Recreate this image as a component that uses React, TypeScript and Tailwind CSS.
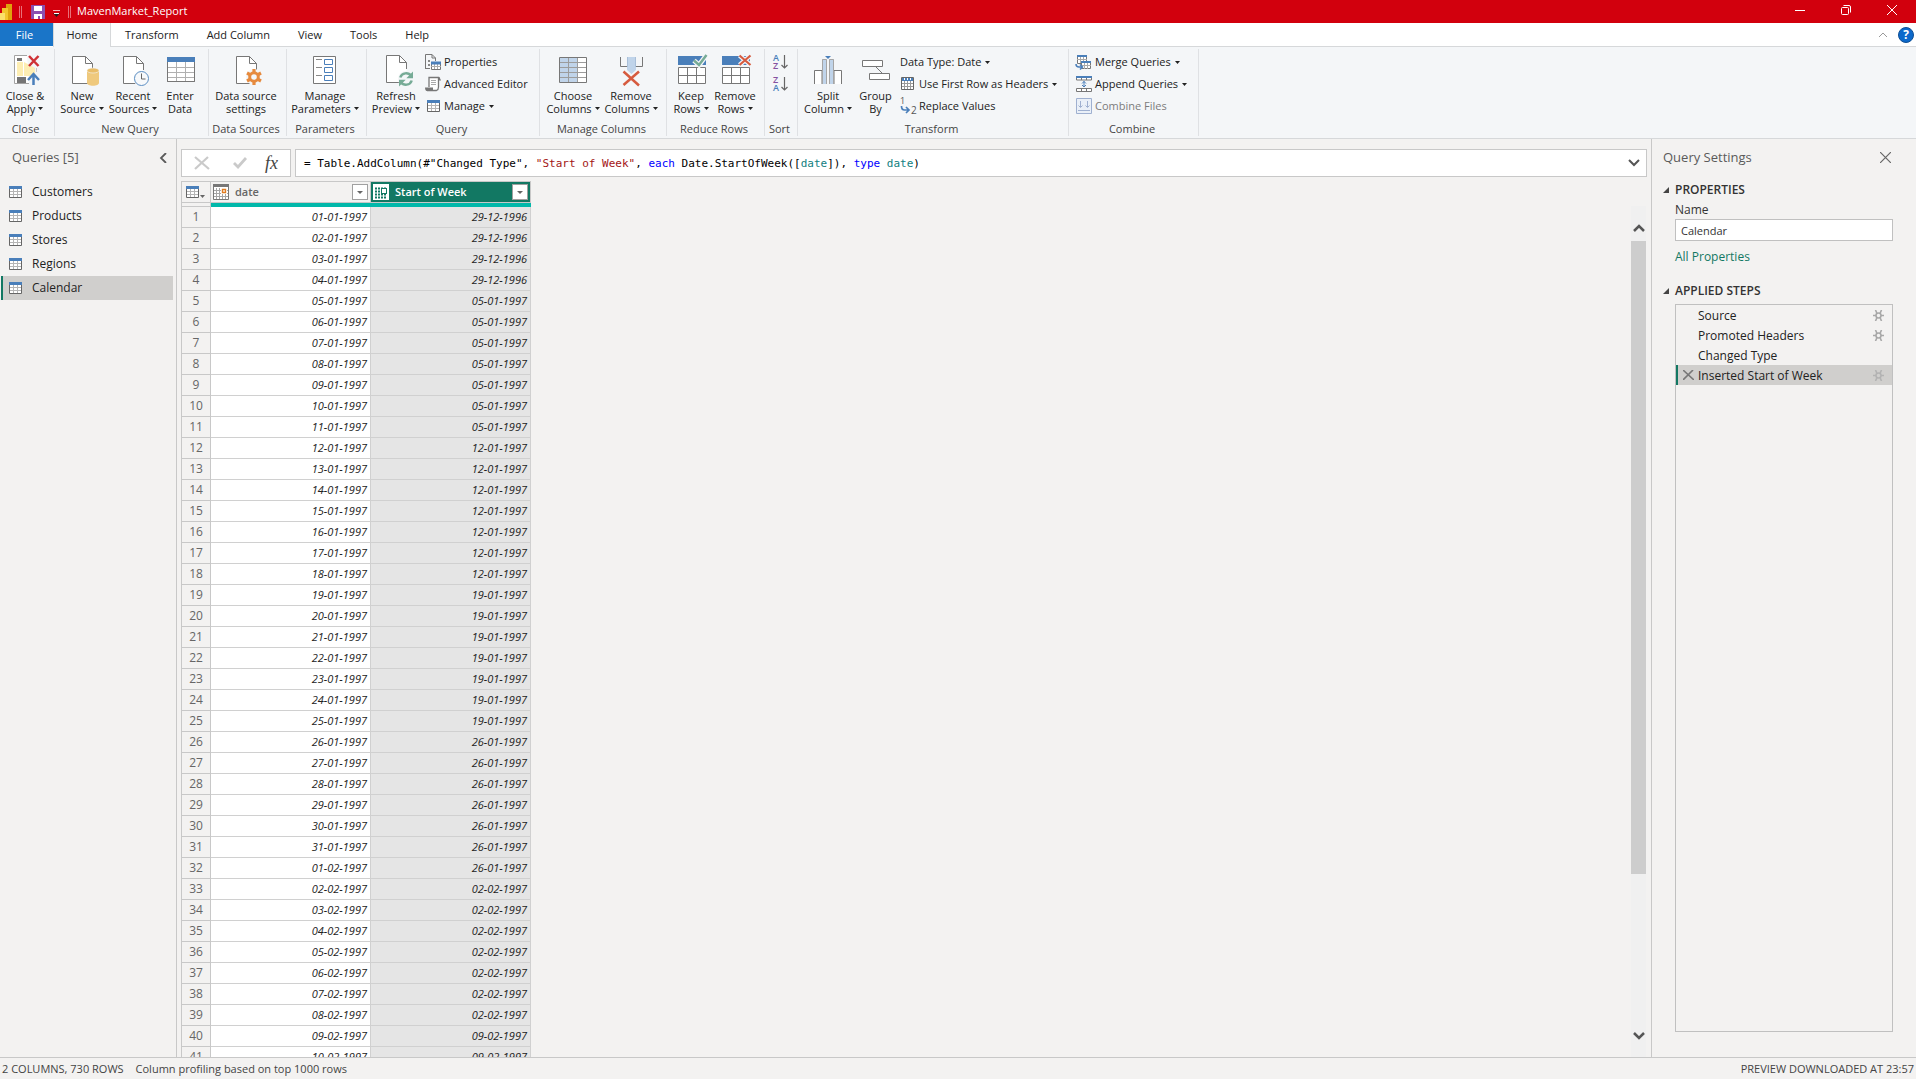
import type { ReactNode } from "react";

/* ---------- shared data ---------- */

const tabs = ["Transform", "Add Column", "View", "Tools", "Help"];
const queries = ["Customers", "Products", "Stores", "Regions", "Calendar"];
const steps = [
  { name: "Source", gear: true },
  { name: "Promoted Headers", gear: true },
  { name: "Changed Type", gear: false },
  { name: "Inserted Start of Week", gear: true },
];

const DAY = 86400000;
const pad = (n: number) => String(n).padStart(2, "0");
const format = (d: Date) =>
  `${pad(d.getUTCDate())}-${pad(d.getUTCMonth() + 1)}-${d.getUTCFullYear()}`;

const rows = Array.from({ length: 41 }, (_, i) => {
  const date = new Date(Date.UTC(1997, 0, 1) + i * DAY);
  const week = new Date(date.getTime() - date.getUTCDay() * DAY);
  return { n: i + 1, date: format(date), week: format(week) };
});

/* ---------- icons ---------- */

function Big({ children }: { children: ReactNode }) {
  return (
    <svg className="h-8 w-8 shrink-0 overflow-visible" viewBox="0 0 32 32" fill="none" aria-hidden="true">
      {children}
    </svg>
  );
}

function Small({ children }: { children: ReactNode }) {
  return (
    <svg className="h-4 w-4 shrink-0 overflow-visible" viewBox="0 0 16 16" fill="none" aria-hidden="true">
      {children}
    </svg>
  );
}

function Doc({ y = 0 }: { y?: number }) {
  return (
    <g transform={`translate(0 ${y})`}>
      <path d="M6.5 2.5h13l7 7v20h-20z" fill="#fff" />
      <path d="M22 29.5H6.5v-27h13l7 7V16M19.5 2.5v7h7" stroke="#777" />
    </g>
  );
}

const CloseApplyIcon = () => (
  <Big>
    <path d="M18 1.500H5.500v28H20" stroke="#a3a3a3" fill="#fff" />
    <path d="M8 8h6v14H8z M15 8l11 6v8H15z" fill="#fdeeb3" />
    <path d="M8 4h5v3H8zM8 23h9v6H8z" fill="#757575" />
    <path d="M27.500 14v4" stroke="#c9c9c9" />
    <path d="M20 2l9.500 10M29.500 2L20 12" stroke="#cf3236" strokeWidth="2.500" />
    <path d="M24.500 31V20.500M19 26l5.500-6 5.500 6" stroke="#4a7fba" strokeWidth="2.500" />
  </Big>
);

const NewSourceIcon = () => (
  <Big>
    <Doc />
    <path d="M21 17h12v12c0 1.500-2.700 2.700-6 2.700S21 30.500 21 29z" fill="#efc97d" />
    <ellipse cx="27" cy="16.500" rx="6" ry="2.500" fill="#e9bd68" stroke="#f4f6f8" strokeWidth="0.600" />
  </Big>
);

const RecentIcon = () => (
  <Big>
    <Doc />
    <circle cx="24.500" cy="24.500" r="8" fill="#f4f6f8" />
    <circle cx="24.500" cy="24.500" r="7" fill="#f7f9fb" stroke="#5c8fc4" />
    <path d="M24.500 19.500v5.500h4" stroke="#666" />
  </Big>
);

const EnterDataIcon = () => (
  <Big>
    <path d="M3.500 3.500h27v24h-27z" fill="#fff" stroke="#777" />
    <path d="M3 13.500h28M3 18.500h28M3 23.500h28M12.500 8v20M21.500 8v20" stroke="#b0b0b0" />
    <path d="M3.500 8v19.500h27V8" stroke="#777" />
    <path d="M3 3h28v5H3z" fill="#4a7fba" />
  </Big>
);

const DataSettingsIcon = () => (
  <Big>
    <Doc />
    <circle cx="24" cy="23" r="8" fill="#f4f6f8" />
    <circle cx="24" cy="23" r="4.300" stroke="#e68a3e" strokeWidth="3" />
    <path
      d="M24 15v3M24 28v3M17 19l2.700 1.500M28.300 25.500L31 27M17 27l2.700-1.500M28.300 20.500L31 19"
      stroke="#e68a3e"
      strokeWidth="3.200"
    />
  </Big>
);

const ParametersIcon = () => (
  <Big>
    <path d="M4.500 2.500h22v27h-22z" fill="#fff" stroke="#777" />
    <path d="M7 5.500h6M7 13.500h6M7 21.500h6" stroke="#888" />
    <path d="M15.500 5.500h8v5h-8zM15.500 13.500h8v5h-8zM15.500 21.500h8v5h-8z" stroke="#4a7fba" />
  </Big>
);

const RefreshIcon = () => (
  <Big>
    <Doc y={-1} />
    <circle cx="26" cy="25" r="8" fill="#f4f6f8" />
    <path d="M20.300 23.500c1.500-5 8-5.500 11-1.500M31.700 26.500c-1.500 5-8 5.500-11 1.500" stroke="#76ab96" strokeWidth="2.500" />
    <path d="M33 17.500v6.700h-6.700zM19 32.500v-6.700h6.700z" fill="#76ab96" />
  </Big>
);

const ChooseColumnsIcon = () => (
  <Big>
    <path d="M2.500 3.500h27v25h-27z" fill="#fff" />
    <path d="M3 4h18v24H3z" fill="#c0d4ea" />
    <path d="M3 8.500h26M3 13.500h26M3 18.500h26M3 23.500h26M11.500 4v24M20.500 4v24" stroke="#9c9c9c" />
    <path d="M2.500 3.500h27v25h-27z" stroke="#777" />
  </Big>
);

const RemoveColumnsIcon = () => (
  <Big>
    <path d="M5.500 3v9.500H12M27.500 3v9.500H21" stroke="#777" />
    <path d="M12 3h9v13l-4.500 4-4.500-4z" fill="#c0d4ea" />
    <path d="M12.500 3v10M20.500 3v10" stroke="#a9bfd8" />
    <path d="M8.500 17.500l15.500 14M24 17.500L8.500 31" stroke="#d65b3f" strokeWidth="2.500" />
  </Big>
);

function RowsGrid() {
  return (
    <>
      <path d="M3 2h28v9H3z" fill="#4a7fba" />
      <path d="M3.500 13.500h27v16h-27zM3 21.500h28M12.500 13v17M21.500 13v17" fill="#fff" stroke="#777" />
    </>
  );
}

const KeepRowsIcon = () => (
  <Big>
    <RowsGrid />
    <path d="M19 6.500l5 4.500L31.500 1" stroke="#f4f6f8" strokeWidth="5" />
    <path d="M19 6.500l5 4.500L31.500 1" stroke="#76ab96" strokeWidth="2.500" />
  </Big>
);

const RemoveRowsIcon = () => (
  <Big>
    <RowsGrid />
    <path d="M20.500 1.500l11 9.500M31.500 1.500l-11 9.500" stroke="#f4f6f8" strokeWidth="4.500" />
    <path d="M20.500 1.500l11 9.500M31.500 1.500l-11 9.500" stroke="#d65b3f" strokeWidth="2.200" />
  </Big>
);

const SplitColumnIcon = () => (
  <Big>
    <path d="M2.500 30V16.500H10V30M22 30V16.500h7.500V30" fill="#fff" stroke="#777" />
    <path d="M10 5h5v25h-5zM17 5h5v25h-5z" fill="#c0d4ea" />
    <path d="M10.500 30V5.500h4V30M17.500 30V5.500h4V30" stroke="#a5a5a5" />
    <path d="M13 2h6l-3 3z" fill="#4a7fba" />
  </Big>
);

const GroupByIcon = () => (
  <Big>
    <path d="M2.500 6.500h20v6h-20zM9.500 19.500h20v6h-20z" fill="#fff" stroke="#777" />
    <path d="M16 13l6 6" stroke="#777" />
  </Big>
);

const PropertiesIcon = () => (
  <Small>
    <path d="M.5 14.500V.5H7l3.500 3.500v3M7 .5V4h3.500M0 14.500h5" stroke="#777" />
    <path d="M3 6h2v2H3zM3 10h2v2H3z" fill="#888" />
    <path d="M6.500 8.500h9v7h-9z" fill="#fff" stroke="#777" />
    <path d="M6 12.500h10M9.500 10v5M12.500 10v5" stroke="#aaa" />
    <path d="M6 7.500h10v3H6z" fill="#4a7fba" />
  </Small>
);

const EditorIcon = () => (
  <Small>
    <path d="M4 11V1.500h9.500V11c0 2-.5 3-2 3.500H2" fill="#fff" stroke="#777" strokeWidth="1.300" />
    <path d="M6 4.500h5M6 6.500h5M6 8.500h5" stroke="#aaa" />
    <path d="M0 11.500h8V14c0 .5.500.8 1 1H1.500C.5 14.500 0 13 0 11.500zM13 1h1.500L16 4.500h-3z" fill="#777" />
  </Small>
);

function TableIcon() {
  return (
    <svg className="h-3 w-[13px] shrink-0" viewBox="0 0 13 12" fill="none" aria-hidden="true">
      <path d="M.5.5h12v11H.5z" fill="#fff" />
      <path d="M1 5.500h11M1 8.500h11M4.500 3v9M8.500 3v9" stroke="#b5b5b5" />
      <path d="M.5 3v8.500h12V3" stroke="#666" />
      <path d="M0 0h13v3H0z" fill="#4a7fba" />
    </svg>
  );
}

const HeadersIcon = () => (
  <Small>
    <path d="M1.500 1.500h12v12h-12z" fill="#fff" stroke="#666" />
    <path d="M2 7.500h11M2 10.500h11M4.500 4v9M7.500 4v9M10.500 4v9" stroke="#999" />
    <path d="M2 2h11v3H2z" fill="#4a7fba" />
    <path d="M4.500 2v2M7.500 2v2M10.500 2v2" stroke="#fff" />
  </Small>
);

const ReplaceIcon = () => (
  <Small>
    <text x="0" y="6" fontSize="9" fill="#555">1</text>
    <text x="11" y="16" fontSize="10" fill="#555">2</text>
    <path d="M1.500 8c0 3 1 4 3 4H8M6 9l3 3-3 3" stroke="#4a7fba" strokeWidth="1.700" />
  </Small>
);

const MergeIcon = () => (
  <Small>
    <path d="M1.500 1.500h9v8h-9z" fill="#fff" stroke="#777" />
    <path d="M1 5.500h10M4.500 3v6M7.500 3v6" stroke="#aaa" />
    <path d="M1 1h10v2H1z" fill="#4a7fba" />
    <path d="M5.500 7.500h9v7h-9z" fill="#fff" stroke="#777" />
    <path d="M5 11.500h10M8.500 9v6M11.500 9v6" stroke="#aaa" />
    <path d="M5 7h10v2H5z" fill="#4a7fba" />
    <path d="M0 10c0 2.500 1 3 3 3h2.500M4 10.500L6.500 13 4 15.500" stroke="#4a7fba" strokeWidth="1.500" />
  </Small>
);

const AppendIcon = () => (
  <Small>
    <path d="M.5.5h15v3.500H.5zM.5 12.500h15v3H.5zM5.500 1v3M10.500 1v3M5.500 12.500v3M10.500 12.500v3" fill="#fff" stroke="#777" />
    <path d="M0 0h16v2H0z" fill="#4a7fba" />
    <path d="M8 5v6M6 7.500L8 5.500l2 2M6 9l2 2 2-2" stroke="#4a7fba" />
  </Small>
);

const CombineIcon = () => (
  <Small>
    <path d="M.5.500h15v15H.5z" fill="#eaf0f8" stroke="#9fb0d0" />
    <path d="M4.500 3v6M2.500 7.500l2 2 2-2M11.500 3v6M9.500 7.500l2 2 2-2M2 12.500h12" stroke="#9fb0d0" />
  </Small>
);

function SortIcon({ first, second }: { first: "A" | "Z"; second: "A" | "Z" }) {
  return (
    <Small>
      <text x="0" y="7" fontSize="9" fontWeight="600" fill={first === "A" ? "#4a7fba" : "#8552a1"}>{first}</text>
      <text x="0" y="15" fontSize="9" fontWeight="600" fill={second === "A" ? "#4a7fba" : "#8552a1"}>{second}</text>
      <path d="M11.500 1v13M8.500 11l3 3 3-3" stroke="#666" strokeWidth="1.200" />
    </Small>
  );
}

function Caret({ className = "h-[3px] w-[5px] text-[#222]" }: { className?: string }) {
  return (
    <svg className={`inline-block shrink-0 align-middle ${className}`} viewBox="0 0 5 3" preserveAspectRatio="none" aria-hidden="true">
      <path d="M0 0h5L2.500 3z" fill="currentColor" />
    </svg>
  );
}

function CalendarIcon({ selected }: { selected?: boolean }) {
  if (selected) {
    return (
      <svg className="h-4 w-4 shrink-0" viewBox="0 0 16 16" fill="none" aria-hidden="true">
        <path d="M0 0h16v16H0z" fill="#fff" />
        <path
          d="M2 4.500h12M2 7.500h12M2 10.500h12M2 13.500h12"
          stroke="#127863"
          strokeWidth="2"
          strokeDasharray="2 1"
        />
        <path d="M8 4h6v6H8z" fill="#127863" />
        <path d="M9 5h4v4H9z" fill="#fff" />
      </svg>
    );
  }
  return (
    <svg className="h-4 w-4 shrink-0" viewBox="0 0 16 16" fill="none" aria-hidden="true">
      <path d="M.5.5h15v15H.5z" fill="#fff" stroke="#777" />
      <path d="M1 6.500h14M1 9.500h14M1 12.500h14M3.500 4v11M6.500 4v11M9.500 4v11M12.500 4v11" stroke="#a5a5a5" />
      <path d="M0 0h16v3H0z" fill="#777" />
      <path d="M8 4h6v6H8z" fill="#fff" />
      <path d="M9.500 5.500h3v3h-3z" stroke="#e07b1f" strokeWidth="1.400" />
    </svg>
  );
}

function GearIcon({ faded }: { faded?: boolean }) {
  return (
    <svg className="h-[11px] w-[11px]" viewBox="0 0 11 11" fill="none" aria-hidden="true">
      <g stroke={faded ? "#b3b3b3" : "#a8a8a8"} strokeWidth="1.600">
        <circle cx="5.500" cy="5.500" r="2.500" />
        <path d="M0 5.500h3M8 5.500h3M2.500 0l1.500 3.500M8.500 0L7 3.500M2.500 11l1.500-3.500M8.500 11L7 7.500" />
      </g>
    </svg>
  );
}

/* ---------- ribbon ---------- */

function Group({ title, width, children }: { title: string; width: string; children: ReactNode }) {
  return (
    <section aria-label={title} className={`flex shrink-0 flex-col border-r border-[#dfe1e4] ${width}`}>
      <div className="flex flex-1 pt-[5px]">{children}</div>
      <h2 className="pr-[3px] pb-px text-center leading-3 text-[#444]">{title}</h2>
    </section>
  );
}

type BigButtonProps = { icon: ReactNode; top: string; bottom: string; width: string; caret?: boolean };

function BigButton({ icon, top, bottom, width, caret }: BigButtonProps) {
  return (
    <button className={`flex shrink-0 flex-col items-center whitespace-nowrap leading-[13px] ${width}`}>
      {icon}
      <span className="mt-[3px]">{top}</span>
      <span className="flex items-center gap-[3px]">
        {bottom}
        {caret && <Caret />}
      </span>
    </button>
  );
}

type SmallButtonProps = { icon?: ReactNode; label: string; caret?: boolean; disabled?: boolean };

function SmallButton({ icon, label, caret, disabled }: SmallButtonProps) {
  return (
    <button
      disabled={disabled}
      className="flex h-[22px] items-center gap-[3px] whitespace-nowrap disabled:text-[#7c7c7c]"
    >
      {icon && <span className="flex w-4 justify-center">{icon}</span>}
      {label}
      {caret && <span className="flex w-[7px] justify-center"><Caret /></span>}
    </button>
  );
}

function SmallColumn({ children }: { children: ReactNode }) {
  return <div className="-mt-[3px] ml-[3px] flex flex-col">{children}</div>;
}

function Ribbon() {
  return (
    <div className="flex h-[92px] shrink-0 border-b border-[#d6d8da] bg-[#f4f6f8] pt-0.5 pb-0.5">
      <Group title="Close" width="w-[55px]">
        <BigButton icon={<CloseApplyIcon />} top="Close &amp;" bottom="Apply" width="w-[50px]" caret />
      </Group>
      <Group title="New Query" width="w-[154px]">
        <div className="flex pl-0.5">
          <BigButton icon={<NewSourceIcon />} top="New" bottom="Source" width="w-[50px]" caret />
          <BigButton icon={<RecentIcon />} top="Recent" bottom="Sources" width="w-[52px]" caret />
          <BigButton icon={<EnterDataIcon />} top="Enter" bottom="Data" width="w-[42px]" />
        </div>
      </Group>
      <Group title="Data Sources" width="w-[78px]">
        <BigButton icon={<DataSettingsIcon />} top="Data source" bottom="settings" width="w-[74px]" />
      </Group>
      <Group title="Parameters" width="w-[80px]">
        <BigButton icon={<ParametersIcon />} top="Manage" bottom="Parameters" width="w-[76px]" caret />
      </Group>
      <Group title="Query" width="w-[173px]">
        <div className="flex pl-[3px]">
          <BigButton icon={<RefreshIcon />} top="Refresh" bottom="Preview" width="w-[52px]" caret />
          <SmallColumn>
            <SmallButton icon={<PropertiesIcon />} label="Properties" />
            <SmallButton icon={<EditorIcon />} label="Advanced Editor" />
            <SmallButton icon={<TableIcon />} label="Manage" caret />
          </SmallColumn>
        </div>
      </Group>
      <Group title="Manage Columns" width="w-[127px]">
        <div className="flex pl-1">
          <BigButton icon={<ChooseColumnsIcon />} top="Choose" bottom="Columns" width="w-[58px]" caret />
          <BigButton icon={<RemoveColumnsIcon />} top="Remove" bottom="Columns" width="w-[58px]" caret />
        </div>
      </Group>
      <Group title="Reduce Rows" width="w-[98px]">
        <div className="flex pl-0.5">
          <BigButton icon={<KeepRowsIcon />} top="Keep" bottom="Rows" width="w-[44px]" caret />
          <BigButton icon={<RemoveRowsIcon />} top="Remove" bottom="Rows" width="w-[44px]" caret />
        </div>
      </Group>
      <Group title="Sort" width="w-[33px]">
        <div className="flex flex-col gap-1.5 pl-2">
          <button aria-label="Sort ascending"><SortIcon first="A" second="Z" /></button>
          <button aria-label="Sort descending"><SortIcon first="Z" second="A" /></button>
        </div>
      </Group>
      <Group title="Transform" width="w-[271px]">
        <div className="flex pl-1">
          <BigButton icon={<SplitColumnIcon />} top="Split" bottom="Column" width="w-[52px]" caret />
          <BigButton icon={<GroupByIcon />} top="Group" bottom="By" width="w-[43px]" />
          <SmallColumn>
            <SmallButton label="Data Type: Date" caret />
            <SmallButton icon={<HeadersIcon />} label="Use First Row as Headers" caret />
            <SmallButton icon={<ReplaceIcon />} label="Replace Values" />
          </SmallColumn>
        </div>
      </Group>
      <Group title="Combine" width="w-[130px]">
        <div className="flex pl-1">
          <SmallColumn>
            <SmallButton icon={<MergeIcon />} label="Merge Queries" caret />
            <SmallButton icon={<AppendIcon />} label="Append Queries" caret />
            <SmallButton icon={<CombineIcon />} label="Combine Files" disabled />
          </SmallColumn>
        </div>
      </Group>
    </div>
  );
}

/* ---------- window chrome ---------- */

function TitleBar() {
  return (
    <header className="flex h-[23px] shrink-0 items-center bg-[#d2000d] text-white">
      <svg className="h-4 w-3" viewBox="0 0 12 16" aria-hidden="true">
        <path d="M6 0h6v16H6z" fill="#dfa20c" />
        <path d="M2 4h6v12H2z" fill="#f2c52c" />
        <path d="M0 9h5v7H0z" fill="#fbe06a" />
      </svg>
      <span className="ml-[7px] h-3 w-[3px] border-x border-[#e8707a]" />
      <button aria-label="Save" className="ml-[9px]">
        <svg className="h-3.5 w-3.5" viewBox="0 0 14 14" aria-hidden="true">
          <path d="M0 0h14v14H0z" fill="#8b4fb0" />
          <path d="M3 1h8v5H3zM3 9h8v5H9v-3H7v3H3z" fill="#fff" />
        </svg>
      </button>
      <button aria-label="Customize toolbar" className="ml-2 mt-1">
        <svg className="h-2 w-[7px]" viewBox="0 0 7 8" aria-hidden="true">
          <path d="M0 0h7v1H0z" fill="#f5b5ba" />
          <path d="M0 3h7L3.500 7z" fill="#222" />
          <path d="M1 3h5v1H1z" fill="#fff" />
        </svg>
      </button>
      <span className="ml-2 h-3 w-[3px] border-x border-[#e8707a]" />
      <h1 className="ml-1.5 flex-1 text-[11px]">MavenMarket_Report</h1>
      <div className="flex pr-px pb-[3px]">
        <button aria-label="Minimize" className="flex w-[46px] justify-center">
          <svg className="h-2.5 w-2.5" viewBox="0 0 10 10" stroke="#fff"><path d="M0 5.500h10" /></svg>
        </button>
        <button aria-label="Restore" className="flex w-[46px] justify-center">
          <svg className="h-2.5 w-2.5" viewBox="0 0 10 10" fill="none" stroke="#fff">
            <rect x="0.500" y="2.500" width="7" height="7" rx="1" />
            <path d="M2.500.500H8a1.500 1.500 0 011.500 1.500v5.500" />
          </svg>
        </button>
        <button aria-label="Close" className="flex w-[46px] justify-center">
          <svg className="h-2.5 w-2.5" viewBox="0 0 10 10" stroke="#fff"><path d="M0 0l10 10M10 0L0 10" /></svg>
        </button>
      </div>
    </header>
  );
}

function TabBar() {
  return (
    <nav className="flex h-6 shrink-0 items-stretch bg-white">
      <button className="mb-px w-[53px] bg-[#1a75c8] pt-px pr-1 text-white">File</button>
      <button aria-current="page" className="w-[58px] border-r border-l border-[#d6d8da] bg-[#f4f6f8]">Home</button>
      <div className="flex flex-1 border-b border-[#d6d8da] pt-px">
        {tabs.map((tab) => (
          <button key={tab} className="px-3.5">{tab}</button>
        ))}
        <div className="ml-auto flex items-center gap-2.5 pr-0.5">
          <button aria-label="Collapse ribbon">
            <svg className="h-1.5 w-2.5" viewBox="0 0 10 6" fill="none" stroke="#999"><path d="M1 5l4-4 4 4" /></svg>
          </button>
          <button aria-label="Help" className="flex h-4 w-4 items-center justify-center rounded-full border border-[#0f4f94] bg-[#0c69cb] text-[12px] font-bold text-white">
            ?
          </button>
        </div>
      </div>
    </nav>
  );
}

/* ---------- body panes ---------- */

function QueriesPane() {
  return (
    <aside className="w-[177px] shrink-0 border-r border-[#c8c8c8]">
      <div className="flex h-[41px] items-center justify-between pr-[9px] pb-1 pl-3">
        <h2 className="text-[13px] text-[#5a5a5a]">Queries [5]</h2>
        <button aria-label="Collapse queries">
          <svg className="h-2.5 w-2" viewBox="0 0 8 10" fill="none" stroke="#5a5a5a" strokeWidth="1.800"><path d="M7 0L2 5l5 5" /></svg>
        </button>
      </div>
      <ul>
        {queries.map((q) => {
          const active = q === "Calendar";
          return (
            <li key={q} className="pr-[3px] pl-px">
              <button
                className={`flex h-6 w-full items-center gap-2.5 border-l-2 pl-1.5 text-left text-[12px] text-[#222] ${
                  active ? "border-[#127863] bg-[#d0cfcd]" : "border-transparent"
                }`}
              >
                <TableIcon />
                {q}
              </button>
            </li>
          );
        })}
      </ul>
    </aside>
  );
}

function FormulaBar() {
  return (
    <div className="flex gap-1 pr-1">
      <div className="flex h-7 w-[110px] items-center justify-between border border-[#c8c8c8] bg-white px-3">
        <button aria-label="Cancel formula">
          <svg className="h-3.5 w-4" viewBox="0 0 16 14" fill="none" stroke="#cacaca" strokeWidth="2.200"><path d="M1 1l14 12M14 1L1 13" /></svg>
        </button>
        <button aria-label="Accept formula" className="pl-1">
          <svg className="h-3 w-3.5" viewBox="0 0 14 12" fill="none" stroke="#cacaca" strokeWidth="2.800"><path d="M1 6l4 4 8-9" /></svg>
        </button>
        <button aria-label="Insert function" className="font-['Liberation_Serif',serif] text-[18px] leading-4 text-[#444] italic">
          fx
        </button>
      </div>
      <div className="flex h-7 flex-1 items-center justify-between border border-[#c8c8c8] bg-white pr-1.5 pl-2">
        <code className="pt-0.5 font-['DejaVu_Sans_Mono',monospace] text-[11px] whitespace-pre text-black">
          = Table.AddColumn(#"Changed Type", <span className="text-[#a31515]">"Start of Week"</span>,{" "}
          <span className="text-[#0000ff]">each</span> Date.StartOfWeek([<span className="text-[#108080]">date</span>]),{" "}
          <span className="text-[#0000ff]">type</span> <span className="text-[#108080]">date</span>)
        </code>
        <button aria-label="Expand formula bar">
          <svg className="h-2 w-3" viewBox="0 0 12 8" fill="none" stroke="#555" strokeWidth="2"><path d="M1 1l5 5 5-5" /></svg>
        </button>
      </div>
    </div>
  );
}

function HeaderCell({ name, selected }: { name: string; selected?: boolean }) {
  return (
    <th
      scope="col"
      className={`h-[22px] border-y border-r border-[#c8c8c8] p-0 ${selected ? "bg-[#127863] text-white" : "text-[#666]"}`}
    >
      <div className="flex h-5 items-center pr-0.5 pl-0.5">
        <CalendarIcon selected={selected} />
        <span className="ml-1.5 flex-1 text-left text-[11px] font-semibold">{name}</span>
        <button aria-label={`Filter ${name}`} className="flex h-4 w-4 items-center justify-center border border-[#a0a0a0] bg-white">
          <Caret className="h-[3px] w-1.5 text-[#666]" />
        </button>
      </div>
    </th>
  );
}

function Grid() {
  return (
    <div className="mt-1 flex min-h-0 flex-1 pr-[5px]">
      <div className="min-w-0 flex-1 overflow-hidden">
        <table className="w-[350px] table-fixed border-separate border-spacing-0">
          <colgroup>
            <col className="w-[30px]" />
            <col className="w-40" />
            <col className="w-40" />
          </colgroup>
          <thead>
            <tr>
              <th className="h-[22px] border border-[#c8c8c8] p-0">
                <button aria-label="Table options" className="flex items-end gap-px pl-1">
                  <TableIcon />
                  <Caret className="h-[3px] w-[5px] text-[#666]" />
                </button>
              </th>
              <HeaderCell name="date" />
              <HeaderCell name="Start of Week" selected />
            </tr>
            <tr>
              <td className="h-1 border-x border-b border-[#c8c8c8] p-0" />
              <td className="h-1 bg-[#01b8aa] p-0" />
              <td className="h-1 bg-[#01b8aa] p-0" />
            </tr>
          </thead>
          <tbody>
            {rows.map((r) => (
              <tr key={r.n} className="text-right text-[11px] leading-5 text-[#222] italic">
                <th scope="row" className="border-x border-b border-[#c8c8c8] p-0 text-center text-[12px] leading-5 font-normal text-[#666] not-italic">
                  {r.n}
                </th>
                <td className="border-r border-b border-[#d0d0d0] bg-white p-0 pr-[3px]">{r.date}</td>
                <td className="border-r border-b border-[#d0d0d0] bg-[#e5e5e5] p-0 pr-[3px]">{r.week}</td>
              </tr>
            ))}
          </tbody>
        </table>
      </div>
      <div className="mt-[25px] flex w-[15px] flex-col items-center bg-[#f0f0f0] text-[#555]">
        <button aria-label="Scroll up" className="flex h-[35px] items-center pt-2">
          <svg className="h-2 w-3" viewBox="0 0 12 8" fill="none" stroke="currentColor" strokeWidth="2.500"><path d="M1 7l5-5 5 5" /></svg>
        </button>
        <div className="flex w-full flex-1 flex-col">
          <div className="h-[81%] bg-[#cdcdcd]" />
        </div>
        <button aria-label="Scroll down" className="flex h-[34px] items-center pb-2">
          <svg className="h-2 w-3" viewBox="0 0 12 8" fill="none" stroke="currentColor" strokeWidth="2.500"><path d="M1 1l5 5 5-5" /></svg>
        </button>
      </div>
    </div>
  );
}

function SectionTitle({ children }: { children: ReactNode }) {
  return (
    <h3 className="flex h-5 items-center gap-1.5 pl-[11px] text-[12px] font-semibold text-[#333]">
      <svg className="h-1.5 w-1.5" viewBox="0 0 6 6" aria-hidden="true"><path d="M6 0v6H0z" fill="#444" /></svg>
      {children}
    </h3>
  );
}

function SettingsPane() {
  return (
    <aside className="flex w-[265px] shrink-0 flex-col border-l border-[#c8c8c8]">
      <div className="flex h-[41px] items-center justify-between pr-[25px] pb-1 pl-[11px]">
        <h2 className="text-[13px] text-[#5a5a5a]">Query Settings</h2>
        <button aria-label="Close query settings">
          <svg className="h-[11px] w-[11px]" viewBox="0 0 11 11" stroke="#666" strokeWidth="1.200"><path d="M0 0l11 11M11 0L0 11" /></svg>
        </button>
      </div>
      <SectionTitle>PROPERTIES</SectionTitle>
      <div className="flex flex-col pr-[23px] pl-[23px]">
        <label htmlFor="query-name" className="h-[19px] text-[12px] leading-5 text-[#333]">Name</label>
        <input
          id="query-name"
          defaultValue="Calendar"
          className="h-[22px] w-full border border-[#c0c0c0] bg-white px-[5px] text-[11px] text-[#333] outline-none"
        />
        <a href="#properties" className="mt-1.5 self-start text-[12px] leading-5 text-[#127863]">All Properties</a>
      </div>
      <div className="mt-3.5">
        <SectionTitle>APPLIED STEPS</SectionTitle>
      </div>
      <ul className="mx-[23px] mt-[3px] mb-[25px] flex-1 border border-[#c0c0c0]">
        {steps.map((s, i) => {
          const active = i === 3;
          return (
            <li
              key={s.name}
              className={`flex h-5 items-center border-l-2 pr-2 text-[12px] text-[#222] ${
                active ? "border-[#127863] bg-[#d0cfcd]" : "border-transparent"
              }`}
            >
              <span className="flex w-5 justify-center">
                {active && (
                  <button aria-label="Delete step">
                    <svg className="h-2.5 w-[11px]" viewBox="0 0 11 10" stroke="#777" strokeWidth="1.600"><path d="M0 0l11 10M10 0L0 10" /></svg>
                  </button>
                )}
              </span>
              <span className="flex-1 pt-px">{s.name}</span>
              {s.gear && (
                <button aria-label={`Edit ${s.name}`}>
                  <GearIcon faded={active} />
                </button>
              )}
            </li>
          );
        })}
      </ul>
    </aside>
  );
}

export default function App() {
  return (
    <div className="flex h-screen flex-col overflow-hidden bg-[#f3f2f1] font-['Open_Sans',sans-serif] text-[11px] text-[#222]">
      <TitleBar />
      <TabBar />
      <Ribbon />
      <div className="flex min-h-0 flex-1">
        <QueriesPane />
        <main className="flex min-w-0 flex-1 flex-col pt-2.5 pl-1">
          <FormulaBar />
          <Grid />
        </main>
        <SettingsPane />
      </div>
      <footer className="flex h-[22px] shrink-0 items-center border-t border-[#c8c8c8] px-0.5 pt-px text-[#444]">
        <span>2 COLUMNS, 730 ROWS</span>
        <span className="ml-3 flex-1">Column profiling based on top 1000 rows</span>
        <span>PREVIEW DOWNLOADED AT 23:57</span>
      </footer>
    </div>
  );
}
